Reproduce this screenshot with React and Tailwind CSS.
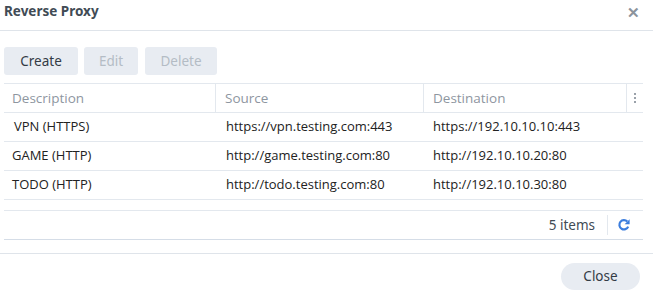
import React from 'react';

const rows = [
  { desc: 'VPN (HTTPS)', src: 'https://vpn.testing.com:443', dst: 'https://192.10.10.10:443', pad: 'pl-[10px]' },
  { desc: 'GAME (HTTP)', src: 'http://game.testing.com:80', dst: 'http://192.10.10.20:80', pad: 'pl-[8px]' },
  { desc: 'TODO (HTTP)', src: 'http://todo.testing.com:80', dst: 'http://192.10.10.30:80', pad: 'pl-[8px]' },
];

function RefreshIcon() {
  return (
    <svg width="14" height="14" viewBox="0 0 14 14" fill="none">
      <path
        d="M11.2 8.6A4.6 4.6 0 1 1 10.3 3.6"
        stroke="#3b7ddd"
        strokeWidth="2.2"
        strokeLinecap="butt"
      />
      <path d="M12.6 1.2v5h-5z" fill="#3b7ddd" />
    </svg>
  );
}

export default function App() {
  return (
    <div className="w-[653px] h-[292px] bg-white flex flex-col font-['Noto_Sans',sans-serif] overflow-hidden">
      <div className="h-[31px] shrink-0 border-b border-[#dfe4ea] flex items-start justify-between pl-[4px] pr-[13px] pt-[1px]">
        <span className="text-[13.5px] font-bold text-[#414b55]">Reverse Proxy</span>
        <span className="text-[#8b939c] text-[15px] font-bold leading-none mt-[4px]">✕</span>
      </div>

      <div className="flex gap-[6px] pl-[4px] mt-[16px]">
        <button className="h-[28px] w-[74px] rounded-[3px] bg-[#e8ecf2] text-[13.5px] text-[#333b45]">Create</button>
        <button className="h-[28px] w-[54px] rounded-[3px] bg-[#e8ecf2] text-[13.5px] text-[#b4bcc5]">Edit</button>
        <button className="h-[28px] w-[72px] ml-[1px] rounded-[3px] bg-[#e8ecf2] text-[13.5px] text-[#b4bcc5]">Delete</button>
      </div>

      <div className="ml-[4px] w-[639px] mt-[8px] border-t border-[#e3e8ee] font-['Open_Sans',sans-serif] text-[13px]">
        <div className="flex h-[29px] border-b border-[#e3e8ee] text-[#8e969f] text-[13.5px]">
          <div className="w-[212px] pl-[8px] flex items-center border-r border-[#e3e8ee]">Description</div>
          <div className="w-[208px] pl-[9px] flex items-center border-r border-[#e3e8ee]">Source</div>
          <div className="w-[203px] pl-[9px] flex items-center border-r border-[#e3e8ee]">Destination</div>
          <div className="flex-1 flex flex-col items-center justify-center gap-[2px]">
            <span className="w-[2px] h-[2px] bg-[#9aa1aa]" />
            <span className="w-[2px] h-[2px] bg-[#9aa1aa]" />
            <span className="w-[2px] h-[2px] bg-[#9aa1aa]" />
          </div>
        </div>
        {rows.map((r) => (
          <div key={r.desc} className="flex h-[29px] border-b border-[#e3e8ee] text-[#222]">
            <div className={`w-[212px] ${r.pad} flex items-center`}>{r.desc}</div>
            <div className="w-[208px] pl-[10px] flex items-center">{r.src}</div>
            <div className="w-[203px] pl-[9px] flex items-center">{r.dst}</div>
          </div>
        ))}
        <div className="h-[10px]" />
        <div className="flex h-[30px] items-center justify-end border-t border-b border-[#e3e8ee] border-b-[#d5dde7] pr-[12px]">
          <span className="text-[#414b55] text-[13.5px] font-['Noto_Sans',sans-serif]">5 items</span>
          <span className="w-px h-[20px] bg-[#e3e8ee] ml-[12px] mr-[9px]" />
          <RefreshIcon />
        </div>
      </div>

      <div className="mt-[13px] border-t border-[#dfe4ea] flex justify-end pr-[13px] pt-[9px]">
        <button className="h-[27px] w-[79px] rounded-full bg-[#e8ecf2] text-[13.5px] text-[#333b45]">Close</button>
      </div>
    </div>
  );
}
